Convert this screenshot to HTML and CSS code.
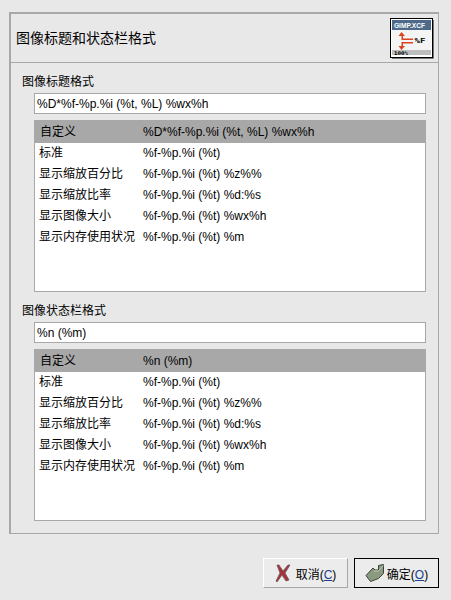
FILE: index.html
```html
<!DOCTYPE html>
<html lang="zh-CN">
<head>
    <meta charset="UTF-8">
    <title>图像标题和状态栏格式</title>
    <link rel="stylesheet" href="styles.css">
</head>
<body>

<div class="dialog">
    <div class="panel">
        <div class="panel-head">
            <span class="panel-title">图像标题和状态栏格式</span>
            <svg class="head-icon" width="45" height="41" viewBox="0 0 45 41">
                <rect x="0.5" y="0.5" width="42" height="39" fill="#fff" stroke="#000"/>
                <path d="M43.500 2v38.500H2" fill="none" stroke="#777"/>
                <rect x="2" y="2" width="39" height="10" fill="#4d6a8a"/>
                <text x="4" y="10" class="icon-top" textLength="31" lengthAdjust="spacingAndGlyphs">GIMP.XCF</text>
                <rect x="2" y="12" width="39" height="20" fill="#f4f4f4"/>
                <rect x="2" y="32" width="39" height="5" fill="#bdbdbd"/>
                <text x="4" y="37" class="icon-bottom" textLength="14" lengthAdjust="spacingAndGlyphs">100%</text>
                <path d="M11.500 14l3.500 4h-2v2.500h10v1.500h-11.500v-4h-3z" fill="#d9431e"/>
                <path d="M11.500 32l3.500-4h-2v-2.500h10v-1.500h-11.500v4h-3z" fill="#d9431e"/>
                <text x="24.500" y="25" class="icon-fmt" textLength="11" lengthAdjust="spacingAndGlyphs">%F</text>
            </svg>
        </div>
        <div class="panel-body">
            <section class="format-group">
                <div class="group-label">图像标题格式</div>
                <div class="group-inner">
                    <div class="text-entry">%D*%f-%p.%i (%t, %L) %wx%h</div>
                    <div class="format-list">
                        <div class="format-row selected"><span class="row-name">自定义</span><span>%D*%f-%p.%i (%t, %L) %wx%h</span></div>
                        <div class="format-row"><span class="row-name">标准</span><span>%f-%p.%i (%t)</span></div>
                        <div class="format-row"><span class="row-name">显示缩放百分比</span><span>%f-%p.%i (%t) %z%%</span></div>
                        <div class="format-row"><span class="row-name">显示缩放比率</span><span>%f-%p.%i (%t) %d:%s</span></div>
                        <div class="format-row"><span class="row-name">显示图像大小</span><span>%f-%p.%i (%t) %wx%h</span></div>
                        <div class="format-row"><span class="row-name">显示内存使用状况</span><span>%f-%p.%i (%t) %m</span></div>
                    </div>
                </div>
            </section>
            <section class="format-group">
                <div class="group-label">图像状态栏格式</div>
                <div class="group-inner">
                    <div class="text-entry">%n (%m)</div>
                    <div class="format-list">
                        <div class="format-row selected"><span class="row-name">自定义</span><span>%n (%m)</span></div>
                        <div class="format-row"><span class="row-name">标准</span><span>%f-%p.%i (%t)</span></div>
                        <div class="format-row"><span class="row-name">显示缩放百分比</span><span>%f-%p.%i (%t) %z%%</span></div>
                        <div class="format-row"><span class="row-name">显示缩放比率</span><span>%f-%p.%i (%t) %d:%s</span></div>
                        <div class="format-row"><span class="row-name">显示图像大小</span><span>%f-%p.%i (%t) %wx%h</span></div>
                        <div class="format-row"><span class="row-name">显示内存使用状况</span><span>%f-%p.%i (%t) %m</span></div>
                    </div>
                </div>
            </section>
        </div>
    </div>

    <div class="actions">
        <button class="btn" type="button">
            <svg width="16" height="18" viewBox="0 0 16 18">
                <path d="M2 1l2 0 4 6 5-6 2 0-5 8 4 7-3 1-4-6-5 7-1-1 4-8z" fill="#a8323c" stroke="#6b5a5c" stroke-width="0.800"/>
            </svg>
            <span>取消(<u>C</u>)</span>
        </button>
        <button class="btn default" type="button">
            <svg width="20" height="19" viewBox="0 0 20 19">
                <path d="M1 11.500l7-7.500 2 2h3.500v-4.500l5-1v9l-5 5-8 3z" fill="#8a9a7e" stroke="#3e4438" stroke-width="1"/>
                <path d="M9 7h4.500l5-5.500" fill="none" stroke="#c4ccbc" stroke-width="1"/>
            </svg>
            <span>确定(<u>O</u>)</span>
        </button>
    </div>
</div>

</body>
</html>
```

FILE: styles.css
```css
html, body {
    margin: 0;
    height: 100%;
}
body {
    background-color: #e8e8e8;
    color: #000;
    font-family: "Liberation Sans", "Noto Sans CJK SC", sans-serif;
    font-size: 12px;
}
.dialog {
    height: 600px;
    padding: 12px 12px 0 9px;
    box-sizing: border-box;
}
.panel {
    border: 1px solid #a8a8a8;
    border-top-width: 2px;
    border-left-width: 2px;
    height: 522px;
    box-sizing: border-box;
}
.panel-head {
    display: flex;
    justify-content: space-between;
    align-items: center;
    height: 48px;
    padding: 0 3px 0 5px;
    border-bottom: 1px solid #a8a8a8;
    box-sizing: content-box;
}
.panel-title {
    font-size: 14px;
    margin-bottom: 2px;
}
.head-icon {
    display: block;
}
.icon-top {
    font: bold 7px "Liberation Sans", sans-serif;
    fill: #fff;
}
.icon-bottom {
    font: bold 5px "DejaVu Sans Mono", monospace;
    fill: #000;
}
.icon-fmt {
    font: bold 7px "DejaVu Sans Mono", monospace;
    fill: #000;
}
.panel-body {
    padding: 10px 12px 0 11px;
}
.format-group {
    margin-bottom: 10px;
}
.group-label {
    font-size: 12px;
    line-height: 18px;
    margin-bottom: 2px;
}
.group-inner {
    padding-left: 12px;
}
.text-entry {
    height: 21px;
    line-height: 21px;
    border: 1px solid #a8a8a8;
    background-color: #fff;
    padding-left: 2px;
    box-sizing: border-box;
    margin-bottom: 6px;
}
.format-list {
    height: 172px;
    border: 1px solid #a8a8a8;
    background-color: #fff;
    box-sizing: border-box;
}
.format-row {
    display: flex;
    height: 21px;
    line-height: 21px;
    padding-left: 4px;
}
.format-row.selected {
    background-color: #a8a8a8;
    height: 22px;
    line-height: 22px;
    padding-left: 5px;
}
.row-name {
    width: 104px;
    flex-shrink: 0;
}
.format-row.selected .row-name {
    width: 103px;
}
.actions {
    display: flex;
    justify-content: flex-end;
    gap: 6px;
    margin-top: 24px;
}
.btn {
    display: flex;
    align-items: center;
    justify-content: center;
    gap: 5px;
    width: 85px;
    height: 30px;
    padding: 0;
    background-color: #ececec;
    border: 1px solid;
    border-color: #fff #a8a8a8 #a8a8a8 #fff;
    font: inherit;
    color: #000;
}
.btn.default {
    border: 1px solid #000;
    box-sizing: border-box;
    gap: 2px;
}
.btn u {
    color: #1a3d8c;
}
```
